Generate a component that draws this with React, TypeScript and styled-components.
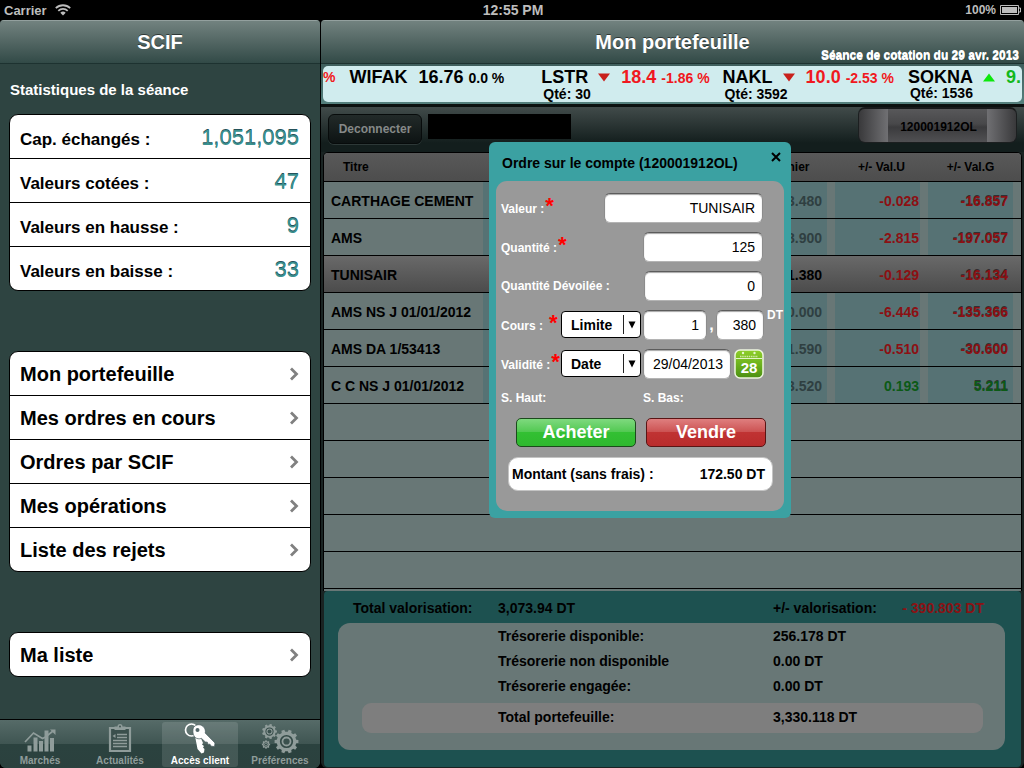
import React from "react";
import styled, { createGlobalStyle, css } from "styled-components";

const GlobalStyle = createGlobalStyle`
  *, *::before, *::after { box-sizing: border-box; }
  body {
    margin: 0;
    background: #000;
    font-family: "Liberation Sans", Arial, Helvetica, sans-serif;
    font-weight: bold;
    font-size: 14px;
    color: #000;
  }
  button, input, select { font: inherit; margin: 0; }
  a { color: inherit; text-decoration: none; }
  dl, dd, h1, h2, ul, p { margin: 0; padding: 0; font-size: inherit; }
  ul { list-style: none; }
`;

/* ---------- shell ---------- */

const Screen = styled.div`
  min-height: 100vh;
  display: flex;
  flex-direction: column;
`;

const StatusBar = styled.div`
  display: grid;
  grid-template-columns: 1fr auto 1fr;
  align-items: center;
  height: 20px;
  padding: 0 2px 0 4px;
  color: #bdbdbd;
`;

const StatusSide = styled.div<{ $end?: boolean }>`
  display: flex;
  align-items: center;
  gap: ${(p) => (p.$end ? 4 : 8)}px;
  font-size: ${(p) => (p.$end ? 12 : 13)}px;
  justify-content: ${(p) => (p.$end ? "flex-end" : "flex-start")};
`;

const Split = styled.div`
  flex: 1;
  display: flex;
  gap: 1px;
`;

const Sidebar = styled.aside`
  flex: 0 0 320px;
  display: flex;
  flex-direction: column;
  background: #2e4441;
  border-radius: 4px 4px 6px 6px;
  overflow: hidden;
`;

const Main = styled.main`
  position: relative;
  flex: 1;
  min-width: 0;
  display: flex;
  flex-direction: column;
  background: #1a2423;
  border-radius: 4px 4px 6px 6px;
  overflow: hidden;
`;

const NavBar = styled.header`
  position: relative;
  display: flex;
  align-items: center;
  justify-content: center;
  height: 44px;
  flex: none;
  border-top: 1px solid #93a09e;
  border-bottom: 1px solid #1d3230;
  background: linear-gradient(#72827f, #324a47);
  color: #fff;
  font-size: 20px;
  text-shadow: 0 -1px 0 rgba(0, 0, 0, 0.5);
`;

const SessionNote = styled.p`
  position: absolute;
  right: 5px;
  bottom: 0;
  font-size: 12px;
  line-height: 14px;
  text-shadow: 0 -1px 0 #fff;
`;

/* ---------- sidebar ---------- */

const SideTitle = styled.h2`
  margin: 17px 10px 15px;
  line-height: 18px;
  font-size: 15px;
  color: #fff;
`;

const Groups = styled.div`
  display: flex;
  flex-direction: column;
  gap: 60px;
  padding: 0 9px 16px;
`;

const groupBox = css`
  border: 1px solid #000;
  border-radius: 9px;
  background: #fff;
`;

const Stats = styled.dl`
  ${groupBox}
`;

const StatRow = styled.div`
  display: flex;
  justify-content: space-between;
  align-items: center;
  height: 44px;
  padding: 0 11px 0 10px;
  border-bottom: 1px solid #000;
  &:last-child { height: 43px; border-bottom: 0; }
`;

const StatName = styled.dt`
  padding-top: 6px;
  font-size: 17px;
`;

const StatValue = styled.dd`
  padding-top: 2px;
  font-size: 22px;
  font-weight: normal;
  color: #3a9190;
  text-shadow: 0 -1px 0 #24525a;
`;

const Menu = styled.ul`
  ${groupBox}
`;

const MenuItem = styled.li`
  border-bottom: 1px solid #000;
  &:last-child { border-bottom: 0; }
`;

const MenuLink = styled.a`
  display: flex;
  justify-content: space-between;
  align-items: center;
  height: 43px;
  padding: 1px 10px 0;
  font-size: 20px;
`;

const TabBar = styled.nav`
  display: flex;
  margin-top: auto;
  height: 49px;
  padding: 2px 0 1px;
  border-top: 1px solid #000;
  background: linear-gradient(#566b68, #3f5552 50%, #2b423f 50%, #2b413e);
`;

const Tab = styled.button<{ $active?: boolean }>`
  flex: 1;
  display: flex;
  flex-direction: column;
  align-items: center;
  justify-content: space-between;
  margin: 0 2px;
  padding: 0;
  border: 0;
  border-radius: 3px;
  background: ${(p) => (p.$active ? "rgba(255,255,255,0.12)" : "none")};
  color: ${(p) => (p.$active ? "#fff" : "#8f9c9a")};
  font-size: 10px;
  line-height: 12px;
  white-space: nowrap;
`;

/* ---------- ticker ---------- */

const TickerFrame = styled.div`
  flex: none;
  padding: 2px 2px 2px 2px;
  background: linear-gradient(#3f5f5d, #54807d);
`;

const Ticker = styled.div`
  display: flex;
  height: 36px;
  padding-top: 1px;
  border-radius: 5px;
  background: #d0ecee;
  overflow: hidden;
  white-space: nowrap;
`;

const Quote = styled.div<{ $tail: number }>`
  flex: none;
  padding-right: ${(p) => p.$tail}px;
`;

const QuoteLine = styled.div`
  display: flex;
  align-items: baseline;
  font-size: 18px;
  line-height: 20px;
`;

const Price = styled.span<{ $color: string }>`
  margin: 0 5px 0 11px;
  color: ${(p) => p.$color};
`;

const Percent = styled.span<{ $color: string }>`
  font-size: 14px;
  color: ${(p) => p.$color};
`;

const Arrow = styled.svg`
  align-self: center;
  margin-left: 10px;
`;

const Quantity = styled.div`
  padding-left: 2px;
  line-height: 13px;
`;

/* ---------- toolbar ---------- */

const Toolbar = styled.div`
  flex: none;
  display: flex;
  align-items: flex-start;
  height: 48px;
  padding: 0 7px;
  border-top: 3px solid #0b100f;
  background: linear-gradient(#414b4a, #131e1d 80%);
`;

const LogoutButton = styled.button`
  height: 30px;
  width: 94px;
  margin: 7px 6px 0 0;
  padding: 0;
  border: 1px solid #070b0b;
  border-radius: 6px;
  background: linear-gradient(#222a29, #0d1313);
  box-shadow: 0 1px 0 #2d3837;
  color: #858988;
  font-size: 12px;
`;

const ClientName = styled.div`
  width: 143px;
  height: 25px;
  margin-top: 7px;
  background: #000;
`;

const AccountPicker = styled.select`
  appearance: none;
  width: 159px;
  height: 36px;
  margin-left: auto;
  padding: 2px 0 0 2px;
  border: 1px solid #1c1f20;
  border-top: 2px solid #17191a;
  border-radius: 7px;
  background:
    linear-gradient(to right, #39393b, #707073) left / 29px 100% no-repeat,
    linear-gradient(to left, #39393b, #707073) right / 29px 100% no-repeat,
    linear-gradient(#58585a, #48484a 45%, #3b3b3d 55%, #505053);
  color: #000;
  font-size: 12px;
  text-align: center;
  text-align-last: center;
`;

/* ---------- holdings ---------- */

const TableArea = styled.div`
  flex: 1;
  margin: 0 2px 0 2px;
  border: 1px solid #000;
  border-bottom: 0;
  border-radius: 5px 5px 0 0;
  background: #687776;
  overflow: hidden;
`;

const Holdings = styled.table`
  width: 100%;
  table-layout: fixed;
  border-collapse: separate;
  border-spacing: 0;
`;

const HeadCell = styled.th<{ $w?: number }>`
  width: ${(p) => (p.$w ? `${p.$w}px` : "auto")};
  height: 29px;
  padding: 0;
  border-bottom: 1px solid #000;
  background: linear-gradient(#595959, #4d4d4d);
  font-size: 12px;
  text-align: center;
  &:first-child { text-align: left; padding-left: 19px; }
  &:last-child { padding-right: 8px; }
`;

const Row = styled.tr<{ $selected?: boolean }>`
  ${(p) => p.$selected && css`background: linear-gradient(#696969, #4b4b4b);`}
`;

const Cell = styled.td<{ $tone?: string; $band?: boolean; $strong?: boolean }>`
  height: 37px;
  padding: 1px 9px 0 7px;
  border-bottom: 1px solid #000;
  color: ${(p) => p.$tone ?? "#000"};
  text-align: ${(p) => (p.$tone ? "right" : "left")};
  white-space: nowrap;
  ${(p) => p.$band && css`background: linear-gradient(to right, #567274 calc(100% - 8px), #687776 calc(100% - 8px));`}
  ${(p) => p.$strong && css`text-shadow: 0 -1px 0 rgba(30, 20, 24, 0.7);`}
  &:nth-child(3), &:last-child { padding-right: 13px; }
`;

/* ---------- totals ---------- */

const Totals = styled.section`
  flex: none;
  margin: 0 3px 1px;
  padding-bottom: 17px;
  border-radius: 4px;
  background: #1d5150;
`;

const TotalsTop = styled.div`
  display: grid;
  grid-template-columns: 145px 275px auto 1fr;
  align-items: center;
  height: 32px;
  padding: 2px 37px 0 29px;
`;

const Loss = styled.span`
  color: #8a1214;
  text-align: right;
`;

const Treasury = styled.div`
  margin: 0 16px 0 14px;
  padding-bottom: 17px;
  border-radius: 12px;
  background: #687776;
`;

const TreasuryRow = styled.div`
  display: grid;
  grid-template-columns: 275px 1fr;
  align-items: center;
  height: 25px;
  padding: 1px 0 0 160px;
`;

const PortfolioTotal = styled(TreasuryRow)`
  height: 30px;
  margin: 5px 22px 0 24px;
  padding: 0 0 2px 136px;
  border-radius: 9px;
  background: #7e7e7e;
`;

/* ---------- order dialog ---------- */

const Dialog = styled.section`
  position: absolute;
  left: 168px;
  top: 122px;
  width: 302px;
  padding: 0 7px 7px;
  border-radius: 6px;
  background: #3ba1a2;
`;

const DialogHead = styled.header`
  display: flex;
  justify-content: space-between;
  height: 39px;
  padding: 2px 0 0 6px;
  line-height: 39px;
`;

const CloseButton = styled.button`
  display: flex;
  align-items: center;
  justify-content: center;
  width: 16px;
  height: 26px;
  padding: 0;
  border: 0;
  background: none;
`;

const OrderForm = styled.form`
  display: flex;
  flex-direction: column;
  padding: 7px 0 20px;
  border-radius: 11px;
  background: #999;
  color: #fff;
`;

const Field = styled.div<{ $end?: number }>`
  display: flex;
  align-items: center;
  height: 39px;
  padding: 0 ${(p) => p.$end ?? 21}px 0 5px;
  font-size: 12px;
`;

const FieldLabel = styled.label<{ $spaced?: boolean }>`
  display: flex;
  align-items: baseline;
  gap: ${(p) => (p.$spaced ? 6 : 1)}px;
  margin-right: auto;
  line-height: 20px;
  white-space: nowrap;
`;

const Star = styled.span`
  color: #f00;
  font-size: 22px;
  line-height: 20px;
`;

const TextBox = styled.input<{ $w: number }>`
  width: ${(p) => p.$w}px;
  height: 30px;
  padding: 0 7px 0 4px;
  border: 1px solid #8c8c8c;
  border-top-color: #5c5c5c;
  border-bottom-color: #b4b4b4;
  border-radius: 6px;
  background: #fff;
  box-shadow: inset 0 1px 1px rgba(0, 0, 0, 0.35);
  color: #000;
  font-size: 14px;
  font-weight: normal;
  text-align: right;
`;

const Combo = styled.span`
  position: relative;
  display: flex;
  margin-right: 2px;
`;

const ComboSelect = styled.select`
  appearance: none;
  width: 80px;
  height: 27px;
  padding: 0 0 0 9px;
  border: 1px solid #000;
  border-radius: 4px;
  background: #fff;
  color: #000;
  font-size: 14px;
`;

const ComboMark = styled.svg`
  position: absolute;
  right: 4px;
  top: 4px;
  pointer-events: none;
`;

const Comma = styled.span`
  width: 9px;
  text-align: center;
  font-size: 16px;
`;

const Currency = styled.span`
  width: 18px;
  padding-left: 3px;
  align-self: flex-start;
  line-height: 20px;
`;

const CalendarButton = styled.button`
  display: flex;
  margin-left: 3px;
  padding: 0;
  border: 0;
  background: none;
`;

const Thresholds = styled.div`
  display: grid;
  grid-template-columns: 142px 1fr;
  align-items: center;
  height: 30px;
  padding-left: 5px;
  font-size: 12px;
`;

const Actions = styled.div`
  display: flex;
  gap: 10px;
  margin: 5px 18px 0 20px;
`;

const ActionButton = styled.button<{ $kind: "buy" | "sell" }>`
  flex: 1;
  height: 29px;
  padding: 0;
  border: 1px solid ${(p) => (p.$kind === "buy" ? "#1c4a1c" : "#5a1414")};
  border-radius: 5px;
  background: ${(p) =>
    p.$kind === "buy"
      ? "linear-gradient(#7fd97f, #50c850 50%, #33c033 50%, #2fb92f)"
      : "linear-gradient(#df7f7f, #cb5050 50%, #c03333 50%, #b92c2c)"};
  color: #fff;
  font-size: 18px;
`;

const Amount = styled.div`
  display: flex;
  justify-content: space-between;
  align-items: center;
  height: 34px;
  margin: 10px 11px 0 12px;
  padding: 0 7px 0 3px;
  border: 1px solid #c4c4c4;
  border-radius: 10px;
  background: #fff;
  color: #000;
`;

/* ---------- icons ---------- */

const Chevron = () => (
  <svg width="12" height="14" viewBox="0 0 12 14">
    <path d="M3 1.500L8.500 7 3 12.500" fill="none" stroke="#808080" strokeWidth="2.800" />
  </svg>
);

const ChartIcon = () => (
  <svg width="32" height="31" viewBox="0 0 32 31" fill="currentColor">
    <path d="M3.500 23.500h4v6h-4zM9.500 15.500h4v14h-4zM15 19h4v10.500h-4zM20.500 8.500h4v21h-4zM26 16h4v13.500h-4z" />
    <path d="M1 20L9.500 11l9 5.500 3-1.500L29 9" fill="none" stroke="currentColor" strokeWidth="1.700" />
    <path d="M26 7.500h5.500V13z" />
  </svg>
);

const ClipboardIcon = () => (
  <svg width="24" height="31" viewBox="0 0 24 31">
    <path d="M2 6h20v23H2z" fill="#3b504d" stroke="currentColor" strokeWidth="2.200" />
    <path d="M6.500 4.500h3a2.500 2.500 0 0 1 5 0h3V8h-11z" fill="currentColor" />
    <circle cx="12" cy="4.500" r="0.900" fill="#3b504d" />
    <path d="M9 12.500h10M9 15.500h10M5 18.500h14M5 21.500h14M5 24.500h14" stroke="currentColor" strokeWidth="1.400" />
    <path d="M4.500 14l3-2v4z" fill="currentColor" />
  </svg>
);

const KeysIcon = () => (
  <svg width="32" height="33" viewBox="0 0 32 33">
    <circle cx="7.500" cy="8" r="6" fill="none" stroke="currentColor" strokeWidth="1.700" />
    <path d="M11 14l4.500-1 3.500 8-1 1.500 2 1.500-1 1.500 1.500 1.500-.5 3.500-2.500 1-4-4.500z" fill="currentColor" />
    <path
      d="M9 7C10 2.500 16 1.500 19 4.300c2.600 2.400 2.700 5.200 2.200 6.700l9.800 10-.5 3.500-3.500-.3-1-2-2 .2-.7-2.200-2-.3-3.800-3.500c-4.500 1.500-9.500-1-8.500-9.400z"
      fill="currentColor"
      stroke="#43585a"
      strokeWidth="0.700"
    />
    <circle cx="13.500" cy="8" r="2" fill="#53676a" />
  </svg>
);

const gearPath = (cx: number, cy: number, outer: number, inner: number, teeth: number) => {
  const points: string[] = [];
  const step = (Math.PI * 2) / teeth;
  for (let i = 0; i < teeth; i++) {
    [[-0.3, inner], [-0.2, outer], [0.2, outer], [0.3, inner]].forEach(([t, r]) => {
      const a = (i + t) * step;
      points.push(`${(cx + Math.cos(a) * r).toFixed(2)} ${(cy + Math.sin(a) * r).toFixed(2)}`);
    });
  }
  return `M${points.join("L")}Z`;
};

const Gear = (p: { x: number; y: number; r: number; teeth: number }) => (
  <g>
    <path d={gearPath(p.x, p.y, p.r, p.r * 0.82, p.teeth)} fill="currentColor" />
    <circle cx={p.x} cy={p.y} r={p.r * 0.48} fill="#8f9c9a" stroke="#344a47" strokeWidth={p.r * 0.14} />
    <circle cx={p.x} cy={p.y} r={p.r * 0.26} fill="#3a504d" />
  </g>
);

const GearsIcon = () => (
  <svg width="38" height="32" viewBox="0 0 38 32">
    <Gear x={8.5} y={9.5} r={7.5} teeth={9} />
    <Gear x={5} y={22.5} r={4.2} teeth={8} />
    <Gear x={25.5} y={19.5} r={12} teeth={10} />
  </svg>
);

const CalendarIcon = () => (
  <svg width="30" height="30" viewBox="0 0 30 30">
    <defs>
      <linearGradient id="leaf" x1="0" y1="0" x2="0" y2="1">
        <stop offset="0" stopColor="#8fcf2a" />
        <stop offset="0.500" stopColor="#6db31e" />
        <stop offset="1" stopColor="#4b8f12" />
      </linearGradient>
    </defs>
    <rect x="1" y="1" width="28" height="28" rx="5" fill="url(#leaf)" stroke="#eef6e0" strokeWidth="1.500" />
    <path d="M2 9.500h26" stroke="#e4f3c8" strokeWidth="1" />
    <path d="M6 7.500h18" stroke="#cfe9a0" strokeWidth="1.500" strokeDasharray="1.500 0.700" />
    <circle cx="9" cy="4" r="1.200" fill="#e9f7d0" />
    <circle cx="20.500" cy="4" r="1.200" fill="#e9f7d0" />
    <text x="15" y="23.500" fill="#fff" fontSize="15" textAnchor="middle">28</text>
  </svg>
);

const Trend = ({ up }: { up?: boolean }) => (
  <Arrow width="12" height="9" viewBox="0 0 12 9">
    <path d={up ? "M0 8.500L6 0.500l6 8z" : "M0 0.500h12L6 8.500z"} fill={up ? "#0ce80c" : "#c8211c"} />
  </Arrow>
);

/* ---------- data ---------- */

const stats = [
  ["Cap. échangés :", "1,051,095"],
  ["Valeurs cotées :", "47"],
  ["Valeurs en hausse :", "9"],
  ["Valeurs en baisse :", "33"],
];

const menu = ["Mon portefeuille", "Mes ordres en cours", "Ordres par SCIF", "Mes opérations", "Liste des rejets"];

const RED = "#f01820";

const holdings = [
  { name: "CARTHAGE CEMENT", last: "3.480", unit: "-0.028", gain: "-16.857" },
  { name: "AMS", last: "8.900", unit: "-2.815", gain: "-197.057" },
  { name: "TUNISAIR", last: "1.380", unit: "-0.129", gain: "-16.134", selected: true },
  { name: "AMS NS J 01/01/2012", last: "0.000", unit: "-6.446", gain: "-135.366" },
  { name: "AMS DA 1/53413", last: "1.590", unit: "-0.510", gain: "-30.600" },
  { name: "C C NS J 01/01/2012", last: "3.520", unit: "0.193", gain: "5.211" },
];

const toneOf = (value: string) => (value.startsWith("-") ? "#8c1013" : "#0c5a16");

/* ---------- page ---------- */

function ComboBox({ id, value }: { id: string; value: string }) {
  return (
    <Combo>
      <ComboSelect id={id} defaultValue={value}>
        <option>{value}</option>
      </ComboSelect>
      <ComboMark width="15" height="19" viewBox="0 0 15 19">
        <path d="M1.500 0v19" stroke="#222" />
        <path d="M6.500 6.500h7l-3.500 7z" fill="#000" />
      </ComboMark>
    </Combo>
  );
}

function OrderDialog() {
  return (
    <Dialog role="dialog" aria-labelledby="order-title">
      <DialogHead>
        <h2 id="order-title">Ordre sur le compte (120001912OL)</h2>
        <CloseButton type="button" aria-label="Fermer">
          <svg width="10" height="10" viewBox="0 0 10 10">
            <path d="M1 1l8 8M9 1L1 9" stroke="#000" strokeWidth="2" />
          </svg>
        </CloseButton>
      </DialogHead>
      <OrderForm onSubmit={(e) => e.preventDefault()}>
        <Field>
          <FieldLabel htmlFor="valeur">Valeur :<Star>*</Star></FieldLabel>
          <TextBox id="valeur" $w={159} defaultValue="TUNISAIR" />
        </Field>
        <Field>
          <FieldLabel htmlFor="quantite">Quantité :<Star>*</Star></FieldLabel>
          <TextBox id="quantite" $w={120} defaultValue="125" />
        </Field>
        <Field>
          <FieldLabel htmlFor="devoilee">Quantité Dévoilée :</FieldLabel>
          <TextBox id="devoilee" $w={119} defaultValue="0" />
        </Field>
        <Field $end={2}>
          <FieldLabel htmlFor="cours" $spaced>Cours :<Star>*</Star></FieldLabel>
          <ComboBox id="cours" value="Limite" />
          <TextBox aria-label="Dinars" $w={64} defaultValue="1" />
          <Comma>,</Comma>
          <TextBox aria-label="Millimes" $w={48} defaultValue="380" />
          <Currency>DT</Currency>
        </Field>
        <Field $end={20}>
          <FieldLabel htmlFor="validite">Validité :<Star>*</Star></FieldLabel>
          <ComboBox id="validite" value="Date" />
          <TextBox aria-label="Date de validité" $w={88} defaultValue="29/04/2013" />
          <CalendarButton type="button" aria-label="Calendrier"><CalendarIcon /></CalendarButton>
        </Field>
        <Thresholds>
          <span>S. Haut:</span>
          <span>S. Bas:</span>
        </Thresholds>
        <Actions>
          <ActionButton type="button" $kind="buy">Acheter</ActionButton>
          <ActionButton type="button" $kind="sell">Vendre</ActionButton>
        </Actions>
        <Amount>
          <span>Montant (sans frais) :</span>
          <output>172.50 DT</output>
        </Amount>
      </OrderForm>
    </Dialog>
  );
}

export default function App() {
  return (
    <>
      <GlobalStyle />
      <Screen>
        <StatusBar>
          <StatusSide>
            Carrier
            <svg width="16" height="12" viewBox="0 0 16 12" fill="none" stroke="#bdbdbd" strokeWidth="1.800">
              <path d="M0.800 4.200a10.300 10.300 0 0 1 14.400 0M3.300 6.900a6.700 6.700 0 0 1 9.400 0" />
              <path d="M5.300 8.800a4 4 0 0 1 5.400 0L8 11.600z" fill="#bdbdbd" stroke="none" />
            </svg>
          </StatusSide>
          <span>12:55 PM</span>
          <StatusSide $end>
            100%
            <svg width="22" height="10" viewBox="0 0 22 10">
              <path d="M0.500 0.500h18v9h-18zM19 3h1.500v4H19" fill="none" stroke="#bdbdbd" />
              <path d="M2 2h15v6H2z" fill="#bdbdbd" />
            </svg>
          </StatusSide>
        </StatusBar>
        <Split>
          <Sidebar>
            <NavBar><h1>SCIF</h1></NavBar>
            <SideTitle>Statistiques de la séance</SideTitle>
            <Groups>
              <Stats>
                {stats.map(([name, value]) => (
                  <StatRow key={name}>
                    <StatName>{name}</StatName>
                    <StatValue>{value}</StatValue>
                  </StatRow>
                ))}
              </Stats>
              <Menu>
                {menu.map((label) => (
                  <MenuItem key={label}>
                    <MenuLink href="#">{label}<Chevron /></MenuLink>
                  </MenuItem>
                ))}
              </Menu>
              <Menu>
                <MenuItem><MenuLink href="#">Ma liste<Chevron /></MenuLink></MenuItem>
              </Menu>
            </Groups>
            <TabBar>
              <Tab><ChartIcon />Marchés</Tab>
              <Tab><ClipboardIcon />Actualités</Tab>
              <Tab $active><KeysIcon />Accès client</Tab>
              <Tab><GearsIcon />Préférences</Tab>
            </TabBar>
          </Sidebar>
          <Main>
            <NavBar>
              <h1>Mon portefeuille</h1>
              <SessionNote>Séance de cotation du 29 avr. 2013</SessionNote>
            </NavBar>
            <TickerFrame>
              <Ticker>
                <Quote $tail={14}>
                  <QuoteLine><Percent $color={RED}>%</Percent></QuoteLine>
                </Quote>
                <Quote $tail={37}>
                  <QuoteLine>WIFAK<Price $color="#000">16.76</Price><Percent $color="#000">0.0 %</Percent></QuoteLine>
                </Quote>
                <Quote $tail={13}>
                  <QuoteLine>LSTR<Trend /><Price $color={RED}>18.4</Price><Percent $color={RED}>-1.86 %</Percent></QuoteLine>
                  <Quantity>Qté: 30</Quantity>
                </Quote>
                <Quote $tail={14}>
                  <QuoteLine>NAKL<Trend /><Price $color={RED}>10.0</Price><Percent $color={RED}>-2.53 %</Percent></QuoteLine>
                  <Quantity>Qté: 3592</Quantity>
                </Quote>
                <Quote $tail={0}>
                  <QuoteLine>SOKNA<Trend up /><Price $color="#12b81c">9.</Price></QuoteLine>
                  <Quantity>Qté: 1536</Quantity>
                </Quote>
              </Ticker>
            </TickerFrame>
            <Toolbar>
              <LogoutButton type="button">Deconnecter</LogoutButton>
              <ClientName />
              <AccountPicker aria-label="Compte" defaultValue="120001912OL">
                <option>120001912OL</option>
              </AccountPicker>
            </Toolbar>
            <TableArea>
              <Holdings>
                <thead>
                  <tr>
                    <HeadCell $w={159}>Titre</HeadCell>
                    <HeadCell as="td" />
                    <HeadCell $w={93}>Dernier</HeadCell>
                    <HeadCell $w={93}>+/- Val.U</HeadCell>
                    <HeadCell $w={93}>+/- Val.G</HeadCell>
                  </tr>
                </thead>
                <tbody>
                  {holdings.map((h) => (
                    <Row key={h.name} $selected={h.selected}>
                      <Cell>{h.name}</Cell>
                      <Cell $band={!h.selected} />
                      <Cell $band={!h.selected} $tone={h.selected ? "#000" : "#2f3f41"}>{h.last}</Cell>
                      <Cell $band={!h.selected} $tone={toneOf(h.unit)}>{h.unit}</Cell>
                      <Cell $band={!h.selected} $tone={toneOf(h.gain)} $strong>{h.gain}</Cell>
                    </Row>
                  ))}
                  {[0, 1, 2, 3, 4].map((i) => (
                    <Row key={i}><Cell colSpan={5} /></Row>
                  ))}
                </tbody>
              </Holdings>
            </TableArea>
            <Totals>
              <TotalsTop>
                <span>Total valorisation:</span>
                <span>3,073.94 DT</span>
                <span>+/- valorisation:</span>
                <Loss>- 390.803 DT</Loss>
              </TotalsTop>
              <Treasury>
                <TreasuryRow><span>Trésorerie disponible:</span><span>256.178 DT</span></TreasuryRow>
                <TreasuryRow><span>Trésorerie non disponible</span><span>0.00 DT</span></TreasuryRow>
                <TreasuryRow><span>Trésorerie engagée:</span><span>0.00 DT</span></TreasuryRow>
                <PortfolioTotal><span>Total portefeuille:</span><span>3,330.118 DT</span></PortfolioTotal>
              </Treasury>
            </Totals>
            <OrderDialog />
          </Main>
        </Split>
      </Screen>
    </>
  );
}
